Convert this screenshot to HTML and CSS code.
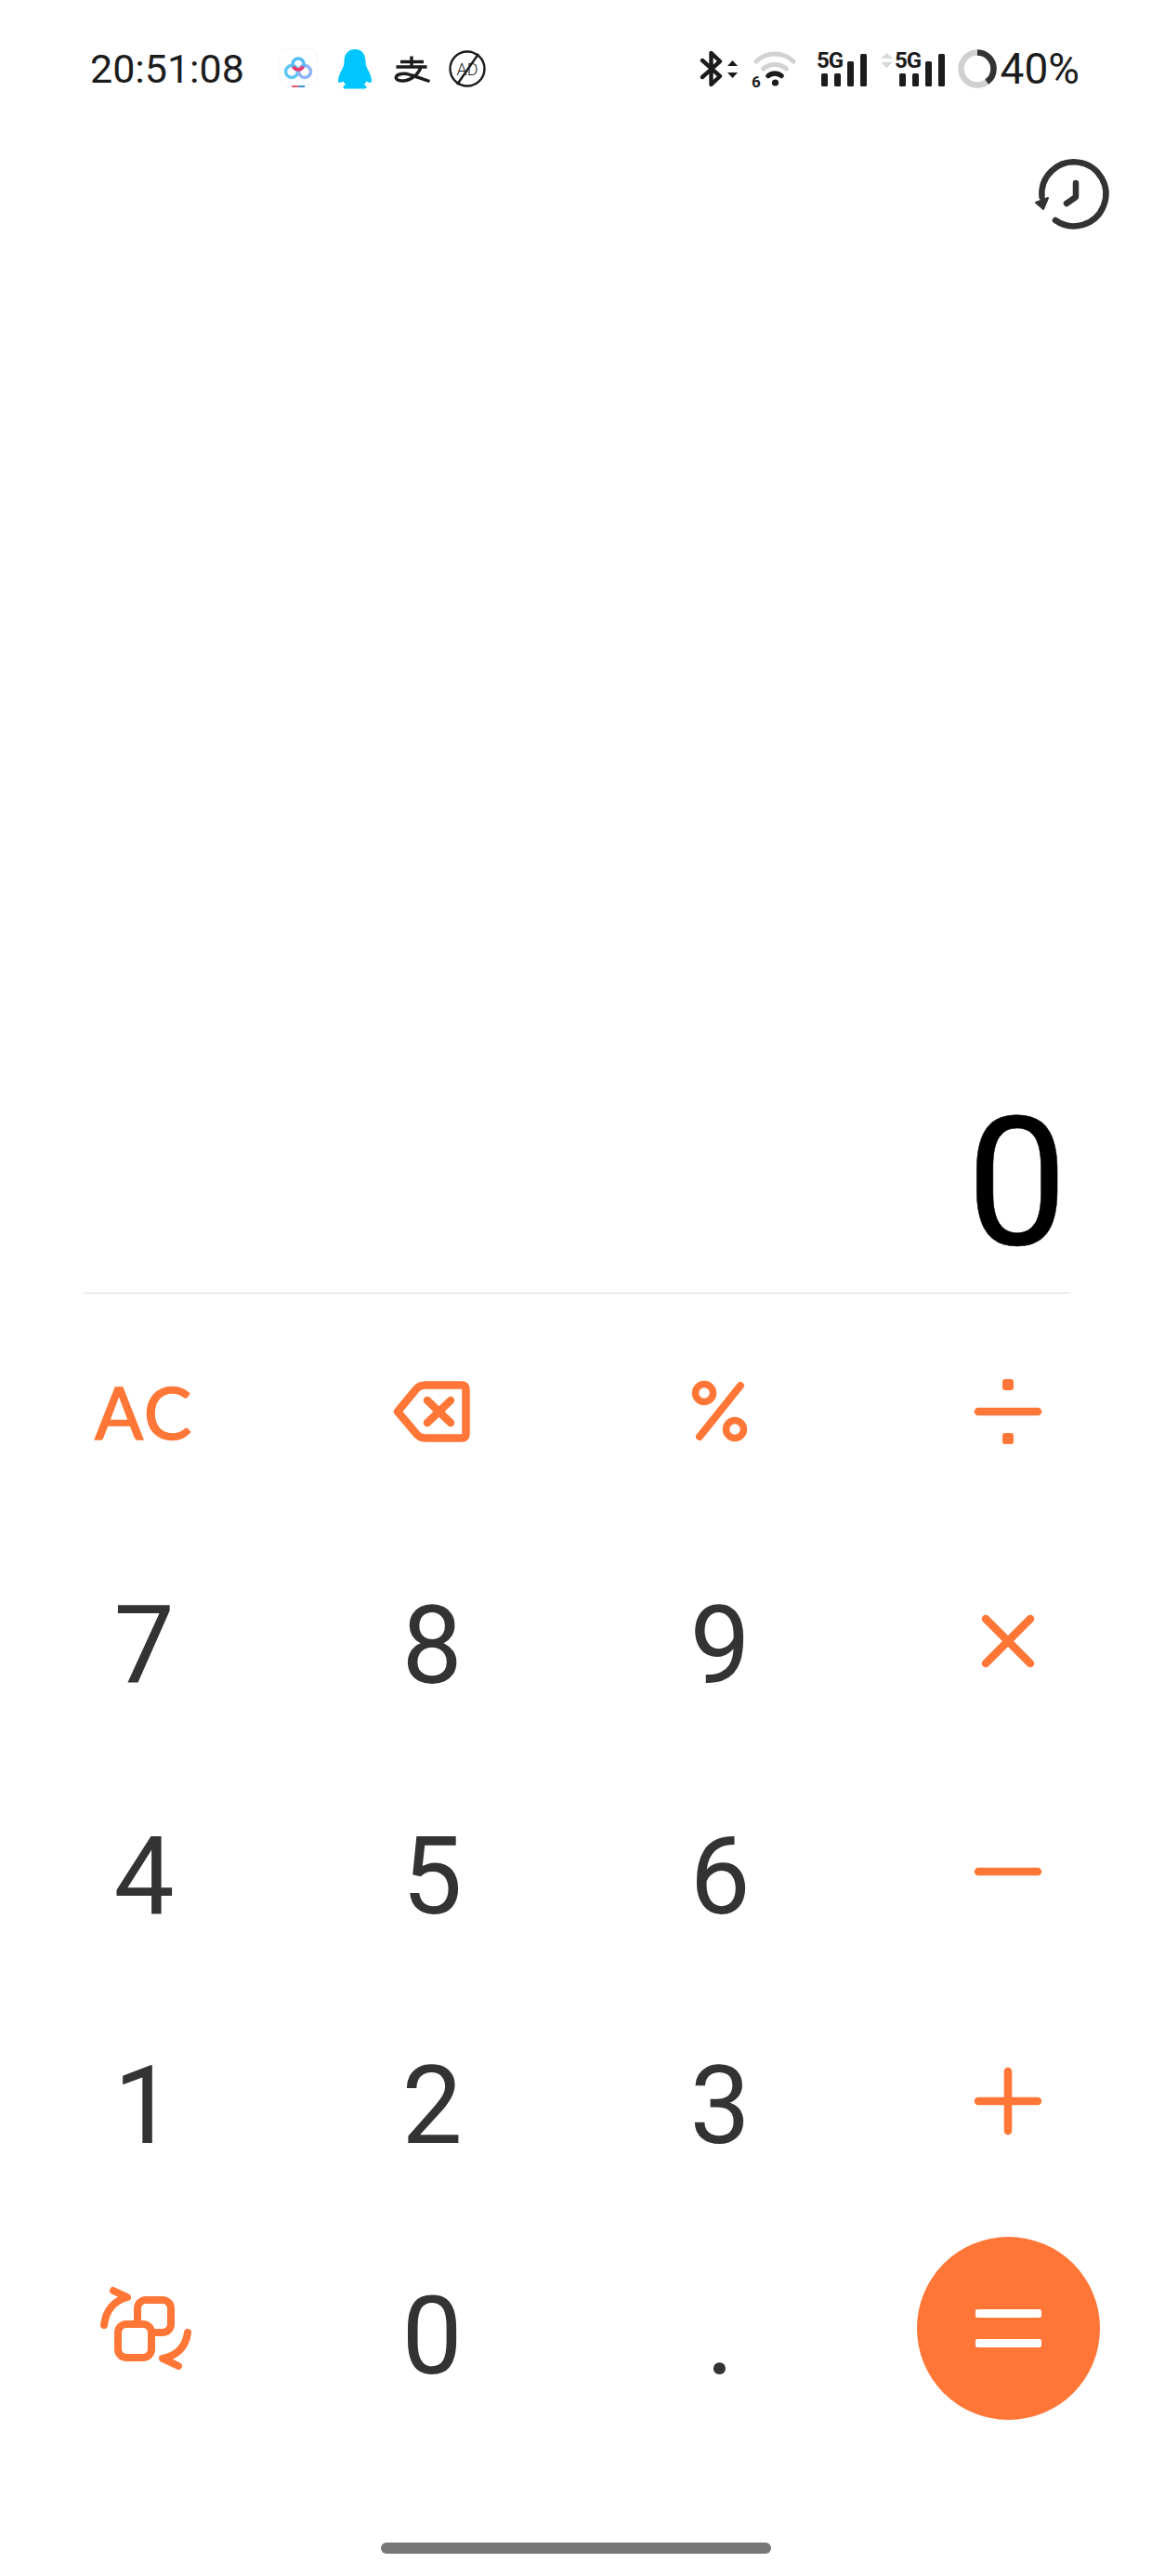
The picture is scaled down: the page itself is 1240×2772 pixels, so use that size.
FILE: index.html
```html
<!DOCTYPE html>
<html lang="en">

<head>
    <meta charset="UTF-8">
    <title>Calculator</title>
    <link rel="stylesheet" href="styles.css">
</head>

<body>
    <div class="screen">
        <div class="status-bar">
            <div class="status-left">
                <span class="clock">20:51:08</span>
                <svg class="ic-cloud" viewBox="0 0 42 44">
                    <rect x="1" y="0" width="40" height="40" rx="8" fill="#fff" stroke="#f6f6f6"/>
                    <circle cx="14" cy="25" r="6.5" fill="none" stroke="#5fc6f6" stroke-width="3.6"/>
                    <circle cx="28" cy="25" r="6.5" fill="none" stroke="#8fb6f6" stroke-width="3.6"/>
                    <circle cx="21" cy="17" r="6" fill="none" stroke="#54bdf2" stroke-width="3.6"/>
                    <path d="M15.6 19.5a6 6 0 0 0 10.8 0" fill="none" stroke="#ef3b6e" stroke-width="3.6"/>
                    <rect x="14" y="40" width="7" height="2" fill="#ef5a6e"/>
                    <rect x="21" y="40" width="7" height="2" fill="#3d8fd8"/>
                </svg>
                <svg class="ic-qq" viewBox="0 0 38 44">
                    <path d="M19 1C11 1 7.500 7 7.500 14c0 3-.5 5-2 8-2.500 4.500-4.500 9-4.500 13 0 2 1 2.500 3.500 1.500l2-1c.7 1.500 1.500 2.500 3 3.500-2 .7-3 1.500-3 3 0 1 1 1.500 4 1.500h17c3 0 4-.5 4-1.500 0-1.500-1-2.300-3-3 1.500-1 2.300-2 3-3.500l2 1c2.500 1 3.500.5 3.500-1.500 0-4-2-8.500-4.500-13-1.500-3-2-5-2-8C30.500 7 27 1 19 1z" fill="#00c6ff"/>
                </svg>
                <svg class="ic-pay" viewBox="0 0 40 30">
                    <path d="M19 1.500v11M7 7.500h25M2.500 13h33M29 13c-2 7-10 15-20 15-5 0-7.500-2-6.500-4.500 1.500-3.500 9-4 15-2 7 2 13 4.500 21 7" fill="none" stroke="#1c1c1c" stroke-width="3.400" stroke-linecap="butt"/>
                </svg>
                <svg class="ic-noad" viewBox="0 0 40 40">
                    <circle cx="20" cy="20" r="18.500" fill="none" stroke="#1c1c1c" stroke-width="2.400"/>
                    <path d="M32 4 9 37" stroke="#1c1c1c" stroke-width="2.400"/>
                    <text x="20" y="26.500" text-anchor="middle" class="ad-label">AD</text>
                </svg>
            </div>
            <div class="status-right">
                <svg class="ic-bt" viewBox="0 0 40 38">
                    <path d="M2 10 21 27 11.500 36V2L21 11 2 28" fill="none" stroke="#1c1c1c" stroke-width="4.400" stroke-linejoin="round" stroke-linecap="round"/>
                    <path d="M29 16l5.500-6 5.500 6zM29 23l5.500 6 5.500-6z" fill="#1c1c1c"/>
                </svg>
                <svg class="ic-wifi" viewBox="0 0 50 40">
                    <path d="M5 12a29 29 0 0 1 40 0" fill="none" stroke="#d2d2d2" stroke-width="5" stroke-linecap="round"/>
                    <path d="M12.500 20a20 20 0 0 1 25 0" fill="none" stroke="#d2d2d2" stroke-width="5" stroke-linecap="round"/>
                    <path d="M18 27.500a11 11 0 0 1 14 0" fill="none" stroke="#1c1c1c" stroke-width="5.500" stroke-linecap="round"/>
                    <circle cx="25.500" cy="35" r="3.600" fill="#1c1c1c"/>
                    <text x="5" y="39.500" text-anchor="middle" class="wifi-label">6</text>
                </svg>
                <svg class="ic-signal" viewBox="0 0 55 40">
                    <text x="0" y="18.500" class="net-label">5G</text>
                    <rect x="5" y="25" width="7" height="14" rx="1.500"/>
                    <rect x="19" y="25" width="7" height="14" rx="1.500"/>
                    <rect x="33" y="12" width="7" height="27" rx="1.500"/>
                    <rect x="47" y="4" width="7" height="35" rx="1.500"/>
                </svg>
                <svg class="ic-signal-2" viewBox="0 0 72 40">
                    <path d="M2 9l6.500-6 6.500 6zM2 13l6.500 6 6.500-6z" fill="#d8d8d8"/>
                    <text x="17" y="18.500" class="net-label">5G</text>
                    <rect x="22" y="25" width="7" height="14" rx="1.500"/>
                    <rect x="36" y="25" width="7" height="14" rx="1.500"/>
                    <rect x="50" y="12" width="7" height="27" rx="1.500"/>
                    <rect x="64" y="4" width="7" height="35" rx="1.500"/>
                </svg>
                <svg class="ic-ring" viewBox="0 0 42 42">
                    <circle cx="21" cy="21" r="17.500" fill="none" stroke="#d0d0d0" stroke-width="6.500"/>
                    <circle cx="21" cy="21" r="17.500" fill="none" stroke="#333" stroke-width="6.500" pathLength="100" stroke-dasharray="40 60" transform="rotate(-90 21 21)"/>
                </svg>
                <span class="battery">40%</span>
            </div>
        </div>

        <div class="tool-row">
            <svg class="ic-history" viewBox="0 0 78 76">
                <path d="M6.500 40A34.500 34.500 0 1 1 21 65" fill="none" stroke="#333" stroke-width="6.500" stroke-linecap="round"/>
                <path d="M0 46l13-5-5 12z" fill="#333" stroke="#333" stroke-width="2" stroke-linejoin="round"/>
                <path d="M43 25v15l-10 7" fill="none" stroke="#333" stroke-width="6.500" stroke-linecap="round" stroke-linejoin="round"/>
            </svg>
        </div>

        <div class="display">0</div>
        <div class="divider"></div>

        <div class="keypad">
            <button class="key key-ac">AC</button>
            <button class="key">
                <svg class="ic-back" viewBox="0 0 82 66">
                    <path d="M4 33 23 10Q27 4.500 34 4.500h39q4.500 0 4.500 4.500v48q0 4.500-4.500 4.500H34q-7 0-11-6z" fill="none" stroke="#ff7636" stroke-width="8.500" stroke-linejoin="round"/>
                    <path d="M36 21 61 45M61 21 36 45" stroke="#ff7636" stroke-width="8.500" stroke-linecap="round"/>
                </svg>
            </button>
            <button class="key">
                <svg class="ic-percent" viewBox="0 0 60 66">
                    <circle cx="13" cy="13" r="9.500" fill="none" stroke="#ff7636" stroke-width="7.500"/>
                    <circle cx="46" cy="52" r="9.500" fill="none" stroke="#ff7636" stroke-width="7.500"/>
                    <path d="M52 5 8 60" stroke="#ff7636" stroke-width="8" stroke-linecap="round"/>
                </svg>
            </button>
            <button class="key">
                <svg class="ic-op" viewBox="0 0 72 72">
                    <path d="M4 36H68" stroke="#ff7636" stroke-width="8.500" stroke-linecap="round"/>
                    <rect x="30" y="1" width="12" height="12" rx="3" fill="#ff7636"/>
                    <rect x="30" y="59" width="12" height="12" rx="3" fill="#ff7636"/>
                </svg>
            </button>

            <button class="key key-num">7</button>
            <button class="key key-num">8</button>
            <button class="key key-num">9</button>
            <button class="key">
                <svg class="ic-op" viewBox="0 0 72 72">
                    <path d="M12 12 60 60M60 12 12 60" stroke="#ff7636" stroke-width="8.500" stroke-linecap="round"/>
                </svg>
            </button>

            <button class="key key-num">4</button>
            <button class="key key-num">5</button>
            <button class="key key-num">6</button>
            <button class="key">
                <svg class="ic-op" viewBox="0 0 72 72">
                    <path d="M4 36H68" stroke="#ff7636" stroke-width="8.500" stroke-linecap="round"/>
                </svg>
            </button>

            <button class="key key-num">1</button>
            <button class="key key-num">2</button>
            <button class="key key-num">3</button>
            <button class="key">
                <svg class="ic-op" viewBox="0 0 72 72">
                    <path d="M4 36H68M36 4V68" stroke="#ff7636" stroke-width="8.500" stroke-linecap="round"/>
                </svg>
            </button>

            <button class="key">
                <svg class="ic-swap" viewBox="0 0 100 90">
                    <rect x="43" y="14" width="36" height="35" rx="9" fill="none" stroke="#ff7636" stroke-width="8"/>
                    <rect x="22" y="40" width="36" height="36" rx="9" fill="#fff" stroke="#ff7636" stroke-width="8"/>
                    <path d="M7 41Q10 17 32 11L17 4" fill="none" stroke="#ff7636" stroke-width="8" stroke-linecap="round" stroke-linejoin="round"/>
                    <path d="M97 49Q94 72 70 77L87 85" fill="none" stroke="#ff7636" stroke-width="8" stroke-linecap="round" stroke-linejoin="round"/>
                </svg>
            </button>
            <button class="key key-num">0</button>
            <button class="key key-num">.</button>
            <button class="key">
                <span class="equals"><i></i><i></i></span>
            </button>
        </div>

        <div class="home-bar"></div>
    </div>
</body>

</html>
```

FILE: styles.css
```css
body {
    margin: 0;
    background: #fff;
    font-family: Roboto, sans-serif;
}

.screen {
    width: 1240px;
    height: 2772px;
    display: flex;
    flex-direction: column;
    overflow: hidden;
}

svg {
    display: block;
    flex: none;
    overflow: visible;
}

/* status bar */
.status-bar {
    height: 148px;
    padding: 0 78px 0 97px;
    display: flex;
    justify-content: space-between;
    align-items: center;
    color: #1c1c1c;
}

.status-left,
.status-right {
    display: flex;
    align-items: center;
}

.clock {
    width: 203px;
    font-size: 43px;
}

.battery {
    margin-left: 4px;
    font-size: 46px;
}

.ic-cloud {
    width: 42px;
    height: 44px;
    margin-right: 21px;
}

.ic-qq {
    width: 38px;
    height: 44px;
    margin-right: 23px;
}

.ic-pay {
    width: 40px;
    height: 30px;
    margin-right: 19px;
}

.ic-noad {
    width: 40px;
    height: 40px;
}

.ad-label {
    font-family: Roboto, sans-serif;
    font-size: 18px;
    font-weight: 300;
    fill: #1c1c1c;
}

.ic-bt {
    width: 40px;
    height: 38px;
    margin-right: 15px;
}

.ic-wifi {
    width: 50px;
    height: 40px;
    margin-right: 20px;
}

.wifi-label {
    font-family: Roboto, sans-serif;
    font-size: 17px;
    font-weight: 700;
    fill: #1c1c1c;
}

.ic-signal {
    width: 55px;
    height: 40px;
    margin-right: 12px;
    fill: #1c1c1c;
}

.ic-signal-2 {
    width: 72px;
    height: 40px;
    margin-right: 13px;
    fill: #1c1c1c;
}

.net-label {
    font-family: Roboto, sans-serif;
    font-size: 24px;
    font-weight: 700;
    letter-spacing: -1px;
}

.ic-ring {
    width: 42px;
    height: 42px;
}

/* history */
.tool-row {
    display: flex;
    justify-content: flex-end;
    padding: 24px 47px 0 0;
}

.ic-history {
    width: 78px;
    height: 76px;
}

/* display */
.display {
    flex: 1;
    display: flex;
    justify-content: flex-end;
    align-items: flex-end;
    padding: 0 91px 21px 0;
    font-size: 193px;
    line-height: 1;
    color: #000;
    -webkit-text-stroke: 0.5px #000;
}

.divider {
    height: 1px;
    margin: 0 88px 3px 90px;
    background: #dcdcdc;
}

/* keypad */
.keypad {
    display: grid;
    grid-template-columns: repeat(4, 310px);
    grid-auto-rows: 247.5px;
}

.key {
    display: flex;
    justify-content: center;
    align-items: center;
    padding: 0;
    border: none;
    background: none;
    font-family: Roboto, sans-serif;
    font-size: 116px;
    color: #333;
}

.key-num {
    padding-top: 10px;
}

.key-ac {
    font-family: Lato, sans-serif;
    font-size: 77px;
    letter-spacing: 2px;
    color: #ff7636;
    -webkit-text-stroke: 1.500px #ff7636;
}

.ic-back {
    width: 82px;
    height: 66px;
}

.ic-percent {
    width: 60px;
    height: 66px;
}

.ic-op {
    width: 72px;
    height: 72px;
}

.ic-swap {
    width: 100px;
    height: 90px;
    margin-bottom: 6px;
}

.equals {
    width: 197px;
    height: 197px;
    margin-bottom: 6px;
    border-radius: 50%;
    background: #ff7636;
    display: flex;
    flex-direction: column;
    justify-content: center;
    align-items: center;
    gap: 23px;
}

.equals i {
    width: 71px;
    height: 9px;
    border-radius: 2px;
    background: #fff;
}

.home-bar {
    width: 420px;
    height: 12px;
    margin: 103.5px auto 24px;
    border-radius: 6px;
    background: #777;
}
```
